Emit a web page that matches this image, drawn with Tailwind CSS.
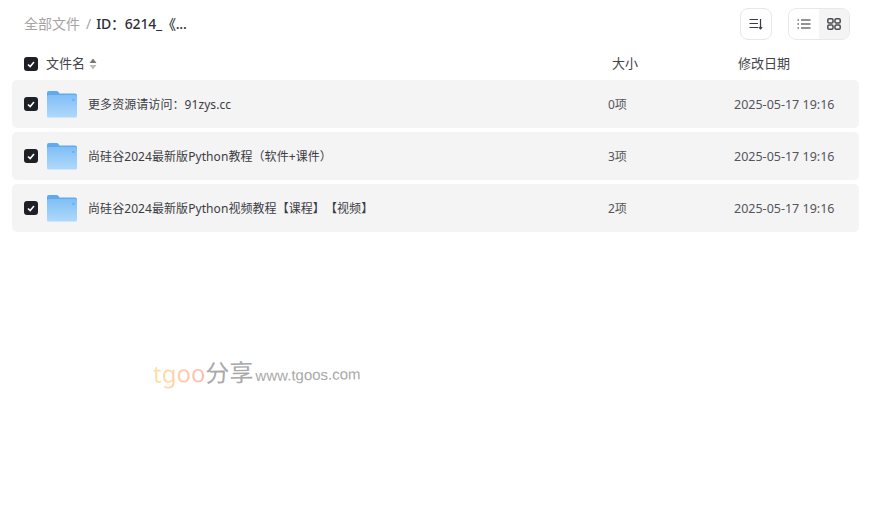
<!DOCTYPE html>
<html lang="zh-CN">
<head>
    <meta charset="UTF-8">
    <title>全部文件</title>
    <script src="https://cdn.jsdelivr.net/npm/@tailwindcss/browser@4"></script>
</head>
<body class="relative w-[874px] h-[514px] overflow-hidden bg-white font-['Noto_Sans','Noto_Sans_CJK_SC',sans-serif] [text-spacing-trim:space-all]">

    <!-- Toolbar -->
    <div class="flex items-center justify-between h-[48px] pl-[24px] pr-[24px]">
        <div class="flex items-center text-[14px] leading-none">
            <span class="text-[#a8a3a3]">全部文件</span>
            <span class="ml-[6px] mr-[5px] text-[#a8a3a3]">/</span>
            <span class="font-medium tracking-[-0.2px] text-[#2c2f38]">ID：6214_《...</span>
        </div>
        <div class="flex items-center gap-[16px]">
            <button class="flex items-center justify-center w-[32px] h-[32px] rounded-[8px] border border-[#e8e8e8] bg-white">
                <svg width="14" height="12" viewBox="0 0 14 12" fill="none" stroke="#3a3a40" stroke-width="1.2">
                    <path d="M0.5 1.5H9M0.5 5.5H9M0.5 9.5H9"/>
                    <path d="M11.5 1V11M9.8 9.2L11.5 11L13.2 9.2"/>
                </svg>
            </button>
            <div class="flex w-[62px] h-[32px] rounded-[8px] border border-[#e8e8e8] overflow-hidden">
                <div class="flex items-center justify-center w-[30px] bg-white">
                    <svg width="14" height="10" viewBox="0 0 14 10" fill="none" stroke="#26262b" stroke-width="1.2">
                        <path d="M0.5 1H2M4 1H13.5M0.5 5H2M4 5H13.5M0.5 9H2M4 9H13.5"/>
                    </svg>
                </div>
                <div class="flex items-center justify-center flex-1 bg-[#f4f4f4]">
                    <svg width="14" height="12" viewBox="0 0 14 12" fill="none" stroke="#4a4a50" stroke-width="1.5">
                        <rect x="0.8" y="0.8" width="5.2" height="4.2" rx="1.3"/>
                        <rect x="8" y="0.8" width="5.2" height="4.2" rx="1.3"/>
                        <rect x="0.8" y="7" width="5.2" height="4.2" rx="1.3"/>
                        <rect x="8" y="7" width="5.2" height="4.2" rx="1.3"/>
                    </svg>
                </div>
            </div>
        </div>
    </div>

    <!-- Column headers -->
    <div class="flex items-center h-[32px] pl-[24px] text-[13px] text-[#43434a]">
        <span class="flex items-center justify-center w-[14px] h-[14px] rounded-[3px] bg-[#1f2026]">
            <svg width="8" height="7" viewBox="0 0 8 7" fill="none" stroke="#fff" stroke-width="1.6"><path d="M1 3.5L3.2 5.6L7 1"/></svg>
        </span>
        <span class="ml-[8px]">文件名</span>
        <svg class="ml-[4px]" width="8" height="12" viewBox="0 0 8 12"><path d="M4 0.5L7.5 5H0.5Z" fill="#77777a"/><path d="M4 11.5L0.5 7H7.5Z" fill="#bdbdbd"/></svg>
        <span class="ml-[515px] w-[126px]">大小</span>
        <span>修改日期</span>
    </div>

    <!-- File rows -->
    <div class="flex flex-col gap-[4px] mx-[12px] w-[847px]">
        <div class="flex items-center h-[48px] pl-[12px] rounded-[5px] bg-[#f4f4f4]">
            <span class="flex items-center justify-center w-[14px] h-[14px] rounded-[3px] bg-[#1f2026]">
                <svg width="8" height="7" viewBox="0 0 8 7" fill="none" stroke="#fff" stroke-width="1.6"><path d="M1 3.5L3.2 5.6L7 1"/></svg>
            </span>
            <svg class="ml-[9px] shrink-0" width="30" height="28" viewBox="0 0 30 28">
                <defs>
                    <linearGradient id="folderBody" x1="0" y1="0" x2="0" y2="1">
                        <stop offset="0" stop-color="#80bef6"/>
                        <stop offset="1" stop-color="#b0d9fb"/>
                    </linearGradient>
                </defs>
                <path d="M0 3Q0 1 2 1H9.5Q11 1 11.5 2L12.5 3.5H28Q30 3.5 30 5.5V10H0Z" fill="#5eabf0"/>
                <rect x="0" y="5" width="30" height="22.5" rx="1.5" fill="url(#folderBody)"/>
                <rect x="25" y="9" width="3" height="2" fill="#6fb3f2"/>
            </svg>
            <span class="ml-[11px] w-[520px] pt-[2px] text-[12px] tracking-[0.07px] text-[#3c3c44]">更多资源请访问：91zys.cc</span>
            <span class="w-[126px] pt-[2px] text-[12px] text-[#55555c]">0项</span>
            <span class="pt-[2px] text-[12.5px] text-[#55555c]">2025-05-17 19:16</span>
        </div>
        <div class="flex items-center h-[48px] pl-[12px] rounded-[5px] bg-[#f4f4f4]">
            <span class="flex items-center justify-center w-[14px] h-[14px] rounded-[3px] bg-[#1f2026]">
                <svg width="8" height="7" viewBox="0 0 8 7" fill="none" stroke="#fff" stroke-width="1.6"><path d="M1 3.5L3.2 5.6L7 1"/></svg>
            </span>
            <svg class="ml-[9px] shrink-0" width="30" height="28" viewBox="0 0 30 28">
                <path d="M0 3Q0 1 2 1H9.5Q11 1 11.5 2L12.5 3.5H28Q30 3.5 30 5.5V10H0Z" fill="#5eabf0"/>
                <rect x="0" y="5" width="30" height="22.5" rx="1.5" fill="url(#folderBody)"/>
                <rect x="25" y="9" width="3" height="2" fill="#6fb3f2"/>
            </svg>
            <span class="ml-[11px] w-[520px] pt-[2px] text-[12px] tracking-[0.07px] text-[#3c3c44]">尚硅谷2024最新版Python教程（软件+课件）</span>
            <span class="w-[126px] pt-[2px] text-[12px] text-[#55555c]">3项</span>
            <span class="pt-[2px] text-[12.5px] text-[#55555c]">2025-05-17 19:16</span>
        </div>
        <div class="flex items-center h-[48px] pl-[12px] rounded-[5px] bg-[#f4f4f4]">
            <span class="flex items-center justify-center w-[14px] h-[14px] rounded-[3px] bg-[#1f2026]">
                <svg width="8" height="7" viewBox="0 0 8 7" fill="none" stroke="#fff" stroke-width="1.6"><path d="M1 3.5L3.2 5.6L7 1"/></svg>
            </span>
            <svg class="ml-[9px] shrink-0" width="30" height="28" viewBox="0 0 30 28">
                <path d="M0 3Q0 1 2 1H9.5Q11 1 11.5 2L12.5 3.5H28Q30 3.5 30 5.5V10H0Z" fill="#5eabf0"/>
                <rect x="0" y="5" width="30" height="22.5" rx="1.5" fill="url(#folderBody)"/>
                <rect x="25" y="9" width="3" height="2" fill="#6fb3f2"/>
            </svg>
            <span class="ml-[11px] w-[520px] pt-[2px] text-[12px] tracking-[0.07px] text-[#3c3c44]">尚硅谷2024最新版Python视频教程【课程】【视频】</span>
            <span class="w-[126px] pt-[2px] text-[12px] text-[#55555c]">2项</span>
            <span class="pt-[2px] text-[12.5px] text-[#55555c]">2025-05-17 19:16</span>
        </div>
    </div>

    <!-- Watermark -->
    <div class="absolute left-[153px] top-[360px] flex items-baseline -rotate-1 leading-none whitespace-nowrap">
        <span class="pb-[8px] text-[24px] bg-gradient-to-r from-[#ffe2a0] to-[#ffb9b0] bg-clip-text text-transparent">tgoo</span>
        <span class="text-[24px] text-[#a9a9a9]">分享</span>
        <span class="ml-[2px] text-[15px] font-['Liberation_Sans'] text-[#a9a9a9]">www.tgoos.com</span>
    </div>
</body>
</html>
